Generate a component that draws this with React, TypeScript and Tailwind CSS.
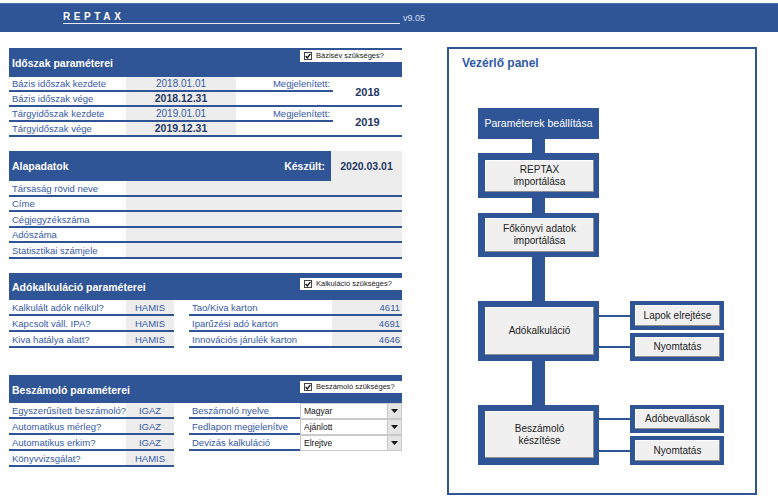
import React from "react";

const labelCls = "text-[9.5px] text-[#3559A6] leading-[12px] pl-[3px] whitespace-nowrap";

function CheckBox({ text, w }: { text: string; w: string }) {
  return (
    <div className={`${w} h-[12px] bg-white flex items-center pl-[4px] gap-[4px]`}>
      <div className="w-[8px] h-[8px] border border-[#444] bg-white flex items-center justify-center">
        <svg width="6" height="6" viewBox="0 0 6 6">
          <path d="M0.6 3 L2.3 4.9 L5.4 0.9" fill="none" stroke="#111" strokeWidth="1.3" />
        </svg>
      </div>
      <span className="text-[7.5px] text-[#222] leading-[10px] whitespace-nowrap">{text}</span>
    </div>
  );
}

function Header({ title, check, h, checkTop }: { title: string; check: string; h: string; checkTop: string }) {
  return (
    <div className={`${h} bg-[#2F5597] flex justify-between`}>
      <div className="self-center pl-[3px] text-white font-bold text-[10.5px] leading-[13px] pt-[2px]">{title}</div>
      <div className={checkTop}>
        <CheckBox text={check} w="w-[102px]" />
      </div>
    </div>
  );
}

function Dropdown({ value }: { value: string }) {
  return (
    <div className="w-[102px] h-[16px] bg-white border border-[#c9c9c9] flex items-center">
      <span className="flex-1 pl-[3px] text-[8.5px] text-[#111] leading-[12px]">{value}</span>
      <div className="w-[14px] h-full bg-[#e4e4e4] border-l border-[#c9c9c9] flex items-center justify-center">
        <svg width="7" height="4" viewBox="0 0 7 4">
          <polygon points="0,0 7,0 3.5,4" fill="#111" />
        </svg>
      </div>
    </div>
  );
}

function Btn({ children, cls }: { children: React.ReactNode; cls: string }) {
  return (
    <div className={`${cls} bg-[#2F5597]`}>
      <div className="w-full h-full bg-[#F0F0F0] shadow-[inset_-1px_-1px_0_#8e8e8e,inset_1px_1px_0_#ffffff] flex items-center justify-center text-center text-[10px] text-[#222] leading-[12px]">
        {children}
      </div>
    </div>
  );
}

function Side({ label, h }: { label: string; h: string }) {
  return (
    <div className="flex items-center">
      <div className="w-[31px] h-[2px] bg-[#2F5597]" />
      <Btn cls={`w-[94px] ${h} pt-[4px] pb-[4px] pl-[5px] pr-[4px]`}>{label}</Btn>
    </div>
  );
}

function Connector({ h }: { h: string }) {
  return <div className={`w-[13px] ${h} bg-[#2F5597] ml-[54px]`} />;
}

export default function App() {
  const line = "border-b-2 border-[#2F5597]";
  const gray = "bg-[#EDEDED]";

  const periods = [
    { label: "Bázis időszak kezdete", start: "2018.01.01", end: "2018.12.31", endLabel: "Bázis időszak vége", year: "2018" },
    { label: "Tárgyidőszak kezdete", start: "2019.01.01", end: "2019.12.31", endLabel: "Tárgyidőszak vége", year: "2019" },
  ];

  const company = ["Társaság rövid neve", "Címe", "Cégjegyzékszáma", "Adószáma", "Statisztikai számjele"];

  const tax = [
    ["Kalkulált adók nélkül?", "HAMIS", "Tao/Kiva karton", "4611"],
    ["Kapcsolt váll. IPA?", "HAMIS", "Iparűzési adó karton", "4691"],
    ["Kiva hatálya alatt?", "HAMIS", "Innovációs járulék karton", "4646"],
  ];

  const report: [string, string, string | null, string | null][] = [
    ["Egyszerűsített beszámoló?", "IGAZ", "Beszámoló nyelve", "Magyar"],
    ["Automatikus mérleg?", "IGAZ", "Fedlapon megjelenítve", "Ajánlott"],
    ["Automatikus erkim?", "IGAZ", "Devizás kalkuláció", "Elrejtve"],
    ["Könyvvizsgálat?", "HAMIS", null, null],
  ];

  return (
    <div className="w-[778px] h-[502px] bg-white overflow-hidden pt-[3px] font-['Liberation_Sans',Arial,sans-serif]">
      <div className="h-[29px] bg-[#2F5597] flex items-end pb-[8px] pl-[63px] border-t border-[#4a6db0]">
        <div className="w-[337px] h-[13px] border-b border-[#e4e9f4] text-white font-bold text-[10px] leading-[12px] tracking-[3.6px]">
          REPTAX
        </div>
        <span className="ml-[3px] text-[9px] leading-[12px] text-[#d3dbec]">v9.05</span>
      </div>

      <div className="flex items-start">
        <div className="ml-[9px] w-[393px] mt-[16px]">
          <Header title="Időszak paraméterei" check="Bázisév szükséges?" h="h-[29px]" checkTop="pt-[2px]" />
          <div className="grid grid-cols-[117px_110px_97px_69px]">
            {periods.map((p) => (
              <React.Fragment key={p.year}>
                <div className={`h-[15px] ${line} flex items-end ${labelCls}`}>{p.label}</div>
                <div className={`h-[15px] ${line} ${gray} flex items-end justify-center text-[10px] leading-[13px] text-[#3559A6]`}>{p.start}</div>
                <div className={`h-[15px] ${line} flex items-end justify-end pr-[3px] text-[9.5px] leading-[12px] text-[#3559A6]`}>Megjelenített:</div>
                <div className={`row-span-2 h-[30px] ${line} flex items-center justify-center font-bold text-[11px] text-[#1F3864] pt-[3px]`}>{p.year}</div>
                <div className={`h-[15px] ${line} flex items-end ${labelCls}`}>{p.endLabel}</div>
                <div className={`h-[15px] ${line} ${gray} flex items-end justify-center font-bold text-[10.5px] leading-[13px] text-[#1F3864]`}>{p.end}</div>
                <div className={`h-[15px] ${line}`} />
              </React.Fragment>
            ))}
          </div>

          <div className="mt-[14px] h-[30px] flex">
            <div className="w-[322px] bg-[#2F5597] flex items-center justify-between pl-[3px] pr-[6px] text-white font-bold text-[10.5px] pt-[2px]">
              <span>Alapadatok</span>
              <span>Készült:</span>
            </div>
            <div className={`flex-1 ${gray} flex items-center justify-center font-bold text-[10.5px] text-[#1F3864] pt-[2px]`}>2020.03.01</div>
          </div>
          {company.map((c) => (
            <div key={c} className={`h-[15.5px] flex ${line}`}>
              <div className={`w-[117px] flex items-end ${labelCls}`}>{c}</div>
              <div className={`flex-1 ${gray}`} />
            </div>
          ))}

          <div className="mt-[14px]">
            <Header title="Adókalkuláció paraméterei" check="Kalkuláció szükséges?" h="h-[27px]" checkTop="pt-[5px]" />
          </div>
          {tax.map((t) => (
            <div key={t[0]} className="h-[16px] flex">
              <div className={`w-[165px] flex ${line}`}>
                <div className={`w-[117px] flex items-end ${labelCls}`}>{t[0]}</div>
                <div className={`flex-1 ${gray} flex items-end justify-center text-[9.5px] leading-[13px] text-[#3559A6]`}>{t[1]}</div>
              </div>
              <div className={`ml-[15px] flex-1 flex ${line}`}>
                <div className={`w-[143px] flex items-end ${labelCls}`}>{t[2]}</div>
                <div className={`flex-1 ${gray} flex items-end justify-end pr-[2px] text-[9.5px] leading-[13px] text-[#3559A6]`}>{t[3]}</div>
              </div>
            </div>
          ))}

          <div className="mt-[27.5px]">
            <Header title="Beszámoló paraméterei" check="Beszámoló szükséges?" h="h-[28px]" checkTop="pt-[6px]" />
          </div>
          {report.map((r) => (
            <div key={r[0]} className="h-[16px] flex">
              <div className={`w-[165px] flex ${line}`}>
                <div className={`w-[117px] flex items-end ${labelCls}`}>{r[0]}</div>
                <div className={`flex-1 ${gray} flex items-end justify-center text-[9.5px] leading-[13px] text-[#3559A6]`}>{r[1]}</div>
              </div>
              {r[2] && r[3] && (
                <div className="ml-[15px] flex-1 flex">
                  <div className={`w-[111px] flex items-end ${line} ${labelCls}`}>{r[2]}</div>
                  <Dropdown value={r[3]} />
                </div>
              )}
            </div>
          ))}
        </div>

        <div className="ml-[45px] mt-[15px] w-[310px] h-[448px] border-2 border-[#2F5597]">
          <div className="pl-[13px] pt-[7px] text-[12px] leading-[14px] font-bold text-[#2F5AA5]">Vezérlő panel</div>
          <div className="ml-[29px] mt-[38px] flex flex-col">
            <div className="w-[121px] h-[31px] bg-[#2F5597] flex items-center justify-center text-white text-[10.5px]">
              Paraméterek beállítása
            </div>
            <Connector h="h-[14px]" />
            <Btn cls="w-[121px] h-[45px] pt-[7px] pb-[6px] pl-[7px] pr-[5px]">
              <span>REPTAX<br />importálása</span>
            </Btn>
            <Connector h="h-[15px]" />
            <Btn cls="w-[121px] h-[44px] pt-[5px] pb-[5px] pl-[7px] pr-[5px]">
              <span>Főkönyvi adatok<br />importálása</span>
            </Btn>
            <Connector h="h-[44px]" />
            <div className="flex items-start">
              <Btn cls="w-[121px] h-[60px] pt-[6px] pb-[6px] pl-[7px] pr-[5px]">Adókalkuláció</Btn>
              <div className="flex flex-col gap-[3px]">
                <Side label="Lapok elrejtése" h="h-[29px]" />
                <Side label="Nyomtatás" h="h-[28px]" />
              </div>
            </div>
            <Connector h="h-[44px]" />
            <div className="flex items-start">
              <Btn cls="w-[121px] h-[60px] pt-[6px] pb-[7px] pl-[7px] pr-[5px]">
                <span>Beszámoló<br />készítése</span>
              </Btn>
              <div className="flex flex-col gap-[3px]">
                <Side label="Adóbevallások" h="h-[28px]" />
                <Side label="Nyomtatás" h="h-[29px]" />
              </div>
            </div>
          </div>
        </div>
      </div>
    </div>
  );
}
